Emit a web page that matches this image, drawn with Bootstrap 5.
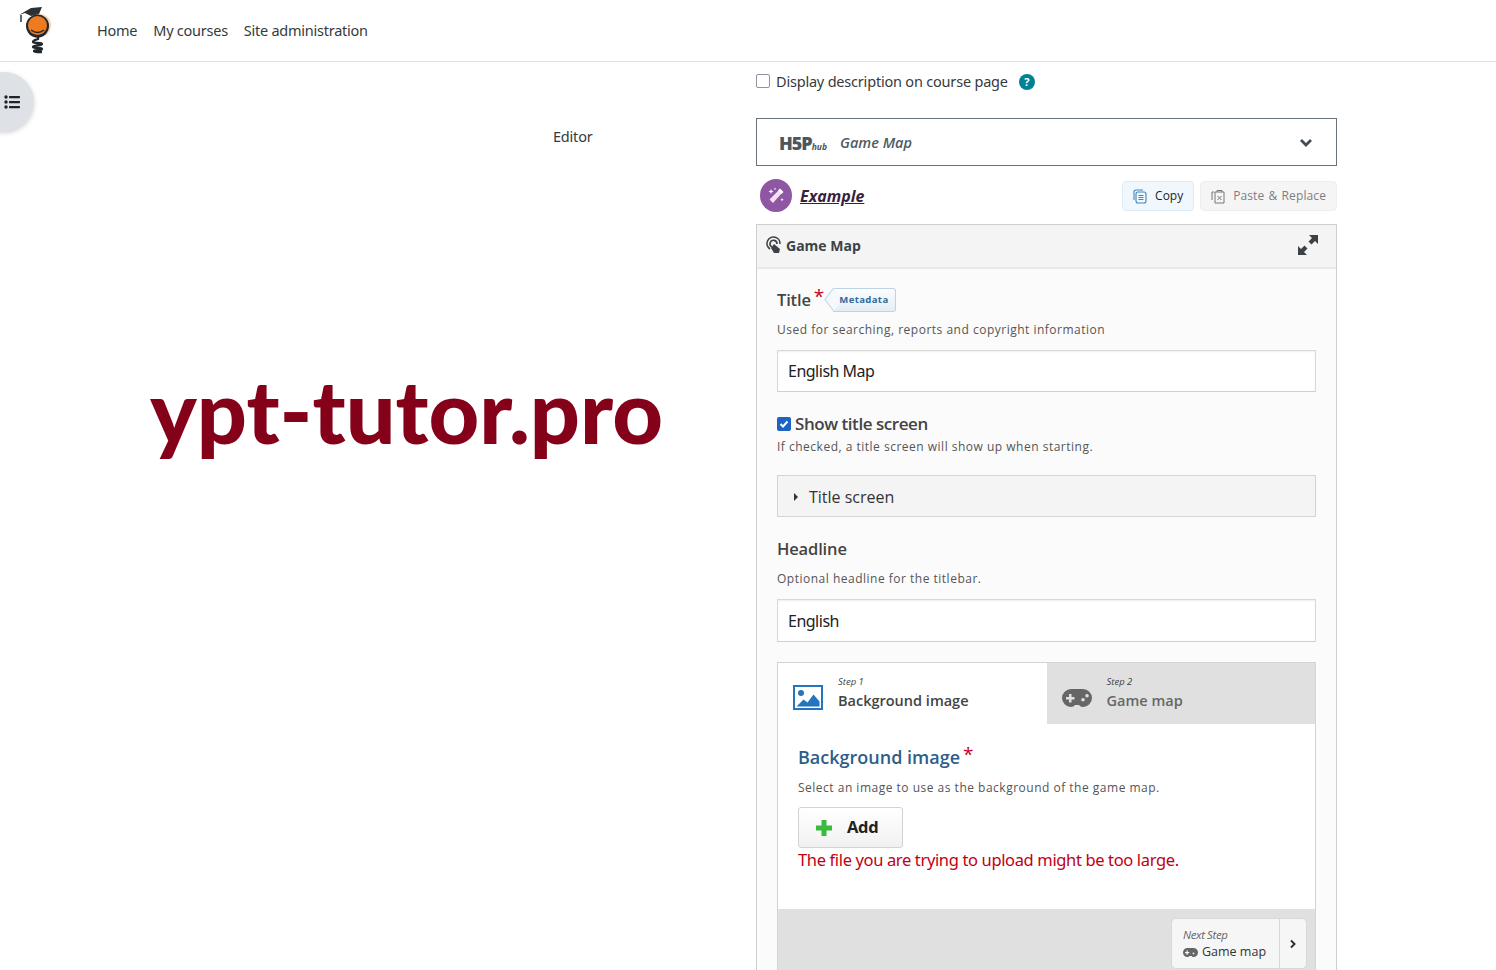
<!DOCTYPE html>
<html lang="en">
<head>
<meta charset="utf-8">
<title>Game Map editor</title>
<link rel="stylesheet" href="https://cdn.jsdelivr.net/npm/bootstrap@5.3.0/dist/css/bootstrap.min.css">
<style>
html,body{height:970px;overflow:hidden;background:#fff;}
body{font-family:"Open Sans","Noto Sans",sans-serif;color:#1d2125;}
.topbar{height:62px;border-bottom:1px solid #dee2e6;padding:0 0 0 17px;}
.logo-wrap{width:36px;height:54px;margin-right:44px;margin-top:-7px;}
.topbar a{font-family:"Noto Sans","Open Sans",sans-serif;font-size:14.5px;letter-spacing:-.25px;color:#373a3c;text-decoration:none;margin-right:16px;line-height:20px;margin-top:-1px;}
.page-grid{height:908px;position:relative;}
.left-pane{width:756px;flex:none;}
.editor-label{font-family:"Noto Sans",sans-serif;font-size:14.5px;letter-spacing:-.2px;color:#373a3c;padding:64px 0 0 553px;line-height:20px;}
.brand-text{font-family:Lato,"Open Sans",sans-serif;font-weight:900;font-size:88px;line-height:100px;color:#850019;padding:0 0 0 150px;margin-top:214px;white-space:nowrap;}
.drawer-btn{position:absolute;left:-26px;top:10px;width:60px;height:59px;border-radius:50%;background:#dee2e6;box-shadow:0 2px 5px rgba(0,0,0,.18);display:flex;align-items:center;justify-content:flex-end;padding-right:14px;}
.right-pane{width:581px;flex:none;}
.desc-row{height:39px;padding:12px 0 0 0;font-family:"Noto Sans",sans-serif;font-size:14.5px;letter-spacing:-.2px;color:#373a3c;line-height:15px;}
.box-check{width:14px;height:14px;border:1.5px solid #8f959e;border-radius:2px;background:#fff;margin-right:6px;flex:none;}
.help-dot{width:16px;height:16px;border-radius:50%;background:#008196;color:#fff;font-size:11px;font-weight:700;line-height:16px;text-align:center;margin-left:11px;letter-spacing:0;}
.hub-select{height:48px;margin-top:17px;border:1px solid #6a737b;padding:2px 23px 0 22px;background:#fff;}
.hub-logo{font-family:"Open Sans",sans-serif;font-weight:800;font-size:18px;letter-spacing:-1px;color:#4c5560;width:48px;white-space:nowrap;line-height:1;}
.hub-logo i{font-size:8.5px;letter-spacing:0;font-weight:700;}
.hub-name{font-style:italic;font-weight:600;font-size:14.5px;color:#4f5a64;margin-left:13px;}
.example-row{height:58px;padding:1px 0 0 4px;}
.wand-dot{width:32px;height:33px;border-radius:50%;background:#8f56a3;margin-right:8px;}
.example-link{font-style:italic;font-weight:700;font-size:16px;color:#3a1f3f;text-decoration:underline;}
.clip-btn{height:30px;border-radius:4px;font-size:12px;padding:1px 10px 0;margin-left:6px;border:1px solid #e6eef4;}
.clip-copy{background:#f1f8fd;color:#1d2125;border-color:#dcebf5;}
.clip-paste{background:#f5f5f5;color:#7a7f85;border-color:#eee;padding-right:10px;padding-left:10px;letter-spacing:.1px;word-spacing:1px;}
.form-frame{border:1px solid #cfcfcf;background:#fbfbfb;height:760px;}
.form-head{height:44px;background:#f4f4f4;border-bottom:2px solid #e8e8e8;padding:0 18px 2px 9px;font-weight:700;font-size:14px;color:#3c4248;}
.form-body{padding:19px 20px 0;}
.field-title{font-weight:600;font-size:16.5px;color:#444;line-height:24px;letter-spacing:-.15px;}
.req{color:#c8001c;font-size:19px;line-height:10px;position:relative;top:-4px;margin-left:3px;}
.meta-tag{font-size:9.5px;font-weight:700;color:#2f6a9b;background:linear-gradient(#fcfdfe,#e4eef6);border:1px solid #bcd3e6;border-left:none;border-radius:0 3px 3px 0;height:24px;padding:0 6px 0 6px;margin-left:9px;position:relative;letter-spacing:.4px;}
.meta-tag::before{content:"";position:absolute;left:-7px;top:3px;width:15px;height:15px;background:#f6f9fc;border-left:1px solid #bcd3e6;border-bottom:1px solid #bcd3e6;transform:rotate(45deg) skew(8deg,8deg);z-index:0;}
.meta-tag span{position:relative;z-index:1;}
.field-help{font-size:12px;color:#555;letter-spacing:.5px;line-height:18px;}
.help-gap{margin-top:9px;}
.help-near{margin-top:3px;}
.help-tight{margin-top:8px;}
.text-field{height:42px;border:1px solid #d8d8d8;border-bottom-color:#cfcfcf;box-shadow:inset 0 1px 2px #eee;background:#fff;font-size:16px;color:#1d2125;padding:0 10px;margin-top:11px;letter-spacing:-.5px;font-family:"Noto Sans",sans-serif;}
.text-field.is-tall{height:43px;}
.check-row{margin-top:21px;height:22px;font-weight:600;font-size:17px;color:#444;letter-spacing:-.45px;}
.tick{width:14px;height:14px;border-radius:2px;background:#1d64c2;margin-right:4px;}
.group-bar{height:42px;background:#f4f4f4;border:1px solid #d3d3d3;margin-top:19px;padding:1px 0 0 16px;font-size:16px;color:#333;}
.caret-r{width:0;height:0;border-left:4px solid #333;border-top:4px solid transparent;border-bottom:4px solid transparent;margin-right:11px;}
.wizard{border:1px solid #d3d3d3;background:#fff;margin-top:20px;height:340px;}
.wiz-tabs{height:61px;}
.wiz-tab{width:50%;padding:0 15px;gap:15px;}
.wiz-tab.is-off{background:#e0e0e0;color:#666;}
.wiz-ico{margin-top:8px;flex:none;}
.wiz-step{font-size:9.5px;font-style:italic;line-height:14px;color:#444;}
.wiz-name{font-weight:600;font-size:14.5px;line-height:22px;color:#444;margin-top:1px;}
.wiz-tab.is-off .wiz-name{color:#666;}
.wiz-pane{padding:19px 20px 0;height:185px;}
.bg-title{font-weight:600;font-size:18px;color:#2d5e8a;line-height:28px;}
.add-btn{width:105px;height:41px;border:1px solid #d3d3d3;border-radius:3px;background:linear-gradient(#fff,#f1f1f1);font-weight:700;font-size:16.500px;color:#222;margin-top:10px;padding-left:17px;letter-spacing:-.3px;gap:15px;}
.err-msg{font-family:"Noto Sans",sans-serif;font-size:16.5px;color:#c00012;line-height:24px;letter-spacing:-.36px;}
.wiz-foot{height:94px;background:#e0e0e0;padding:9px 8px 0 0;justify-content:flex-end;}
.next-btn{width:136px;height:51px;background:#f6f6f6;border:1px solid #d8d8d8;border-radius:5px;}
.next-main{width:108px;padding:8px 0 0 11px;border-right:1px solid #d8d8d8;}
.next-cap{font-size:11.5px;font-style:italic;color:#666;line-height:15px;letter-spacing:-.4px;}
.next-dest{font-size:12.500px;color:#333;line-height:18px;margin-top:1px;}
.next-arrow{flex:1;}
</style>
</head>
<body>
<nav class="topbar d-flex align-items-center">
  <div class="logo-wrap">
    <svg width="36" height="54" viewBox="17 0 36 54" fill="none">
      <circle cx="39.500" cy="25.500" r="11.500" fill="#f5d2b6"/>
      <circle cx="37.500" cy="26" r="11.500" fill="#22272c"/>
      <circle cx="37.500" cy="25.500" r="9.500" fill="#ee7a22"/>
      <path d="M31 30q6.500 5 13 0" stroke="#22272c" stroke-width="1.300"/>
      <path d="M19 15L31 8l11-1-3 7-8 2-6-3z" fill="#2c3136"/>
      <path d="M21 15v7" stroke="#2c3136" stroke-width="1.500"/>
      <path d="M38 37v2c-3 1-5 1-5 3s9 0 9 2-9 1-9 3 9 0 9 2-8 .5-8 2 7 1 7 1" stroke="#22272c" stroke-width="2.300" stroke-linecap="round"/>
    </svg>
  </div>
  <a href="#">Home</a><a href="#">My courses</a><a href="#">Site administration</a>
</nav>

<div class="page-grid d-flex">
  <div class="drawer-btn">
    <svg width="16" height="14" viewBox="0 0 16 14" fill="#212529"><circle cx="2" cy="2" r="1.700"/><circle cx="2" cy="7" r="1.700"/><circle cx="2" cy="12" r="1.700"/><rect x="5" y="1" width="11" height="2.200" rx=".6"/><rect x="5" y="6" width="11" height="2.200" rx=".6"/><rect x="5" y="11" width="11" height="2.200" rx=".6"/></svg>
  </div>
  <div class="left-pane">
    <div class="editor-label">Editor</div>
    <div class="brand-text">ypt-tutor.pro</div>
  </div>
  <div class="right-pane">
    <div class="desc-row d-flex align-items-start">
      <span class="box-check d-inline-block"></span>
      <span>Display description on course page</span>
      <span class="help-dot">?</span>
    </div>
    <div class="hub-select d-flex align-items-center">
      <span class="hub-logo">H5P<i>hub</i></span>
      <span class="hub-name flex-grow-1">Game Map</span>
      <svg width="14" height="10" viewBox="0 0 14 10"><path d="M2 2l5 5 5-5" fill="none" stroke="#444c54" stroke-width="2.800"/></svg>
    </div>
    <div class="example-row d-flex align-items-center">
      <span class="wand-dot d-flex align-items-center justify-content-center">
        <svg width="20" height="20" viewBox="0 0 20 20" fill="#fff"><path d="M12.500 4.500l3 3-8.500 9.500-3.500-3.500z" fill="#f2e0f5"/><path d="M14 2.500l3.500 3.500-2 2-3.500-3.500z"/><path d="M5 3l.7 1.800L7.500 5.500l-1.800.7L5 8l-.7-1.800L2.500 5.500l1.800-.7zM16 12l.5 1.300 1.300.5-1.300.5-.5 1.300-.5-1.300-1.300-.5 1.300-.5zM9 1.500l.4 1 1 .4-1 .4-.4 1-.4-1-1-.4 1-.4z"/></svg>
      </span>
      <a href="#" class="example-link flex-grow-1">Example</a>
      <span class="clip-btn clip-copy d-flex align-items-center gap-2">
        <svg width="14" height="15" viewBox="0 0 14 15" fill="none" stroke="#3f86c0" stroke-width="1.100"><rect x="3" y="3" width="10" height="11" rx="2"/><path d="M1 11V3a2 2 0 0 1 2-2h7M5.500 6.500h5M5.500 8.500h5M5.500 10.500h5"/></svg>
        Copy
      </span>
      <span class="clip-btn clip-paste d-flex align-items-center gap-2">
        <svg width="14" height="15" viewBox="0 0 14 15" fill="none" stroke="#777" stroke-width="1"><path d="M3 3H1v8M4 3h9v11H4zM6 3V1.500h5V3M6.500 7l4 4M10.500 7l-4 4"/></svg>
        Paste &amp; Replace
      </span>
    </div>
    <div class="form-frame">
      <div class="form-head d-flex align-items-center">
        <svg class="me-1" width="16" height="18" viewBox="0 0 16 18" fill="none" stroke="#3c4248" stroke-width="1.600"><path d="M4 13A6.500 6.500 0 1 1 14 8"/><path d="M6 11a3.500 3.500 0 1 1 5-3"/><path d="M8 8l6 5-1 4H8L5 12z" fill="#3c4248" stroke="none"/></svg>
        <span class="flex-grow-1">Game Map</span>
        <svg width="20" height="20" viewBox="0 0 20 20" fill="#3c4248"><path d="M11 0h9v9l-3-3-3.500 3.500-3-3L14 3zM9 20H0v-9l3 3 3.500-3.500 3 3L6 17z"/></svg>
      </div>
      <div class="form-body">
        <div class="d-flex align-items-center">
          <span class="field-title">Title</span><span class="req">*</span>
          <span class="meta-tag d-flex align-items-center"><span>Metadata</span></span>
        </div>
        <div class="field-help help-gap">Used for searching, reports and copyright information</div>
        <div class="text-field d-flex align-items-center">English Map</div>

        <div class="check-row d-flex align-items-center">
          <span class="tick d-flex align-items-center justify-content-center">
            <svg width="10" height="10" viewBox="0 0 10 10"><path d="M1.500 5l2.500 2.500L8.500 2.500" fill="none" stroke="#fff" stroke-width="2"/></svg>
          </span>Show title screen
        </div>
        <div class="field-help help-near">If checked, a title screen will show up when starting.</div>
        <div class="group-bar d-flex align-items-center"><span class="caret-r"></span>Title screen</div>

        <div class="field-title mt-3 pt-1">Headline</div>
        <div class="field-help help-gap">Optional headline for the titlebar.</div>
        <div class="text-field is-tall d-flex align-items-center">English</div>

        <div class="wizard">
          <div class="wiz-tabs d-flex">
            <div class="wiz-tab d-flex align-items-center">
              <svg class="wiz-ico" width="30" height="25" viewBox="0 0 30 25"><rect x="1" y="1" width="28" height="23" fill="#fff" stroke="#2376bd" stroke-width="2"/><circle cx="8" cy="8" r="3" fill="#2376bd"/><path d="M3.500 21.500l7-7 4 3 6-8 6 7v5z" fill="#2376bd"/></svg>
              <div><div class="wiz-step">Step 1</div><div class="wiz-name">Background image</div></div>
            </div>
            <div class="wiz-tab is-off d-flex align-items-center">
              <svg class="wiz-ico" width="30" height="18" viewBox="0 0 30 18" fill="#666"><path fill-rule="evenodd" d="M9 0h12a9 9 0 0 1 0 18c-2 0-3-1-4-2h-4c-1 1-2 2-4 2A9 9 0 0 1 9 0zM7 5v3H4v2.500h3v3h2.500v-3h3V8h-3V5zm14 4a1.800 1.800 0 1 0 0 3.600A1.800 1.800 0 0 0 21 9zm4-4a1.800 1.800 0 1 0 0 3.600A1.800 1.800 0 0 0 25 5z"/></svg>
              <div><div class="wiz-step">Step 2</div><div class="wiz-name">Game map</div></div>
            </div>
          </div>
          <div class="wiz-pane">
            <div class="d-flex"><span class="bg-title">Background image</span><span class="req" style="top:6px">*</span></div>
            <div class="field-help help-tight">Select an image to use as the background of the game map.</div>
            <div class="add-btn d-flex align-items-center">
              <svg width="16" height="16" viewBox="0 0 16 16" fill="#3bba3f"><path d="M5.500 0h5v5.500H16v5h-5.500V16h-5v-5.500H0v-5h5.500z"/></svg>Add
            </div>
            <div class="err-msg">The file you are trying to upload might be too large.</div>
          </div>
          <div class="wiz-foot d-flex">
            <div class="next-btn d-flex">
              <div class="next-main">
                <div class="next-cap">Next Step</div>
                <div class="next-dest d-flex align-items-center gap-1">
                  <svg width="15" height="9" viewBox="0 0 30 18" fill="#666"><path fill-rule="evenodd" d="M9 0h12a9 9 0 0 1 0 18c-2 0-3-1-4-2h-4c-1 1-2 2-4 2A9 9 0 0 1 9 0zM7 5v3H4v2.500h3v3h2.500v-3h3V8h-3V5zm14 4a1.800 1.800 0 1 0 0 3.600A1.800 1.800 0 0 0 21 9z"/></svg>Game map
                </div>
              </div>
              <div class="next-arrow d-flex align-items-center justify-content-center">
                <svg width="8" height="10" viewBox="0 0 8 10"><path d="M2 1.500L5.500 5 2 8.500" fill="none" stroke="#333" stroke-width="2"/></svg>
              </div>
            </div>
          </div>
        </div>
      </div>
    </div>
  </div>
</div>
<script src="https://cdn.jsdelivr.net/npm/bootstrap@5.3.0/dist/js/bootstrap.bundle.min.js"></script>
</body>
</html>
